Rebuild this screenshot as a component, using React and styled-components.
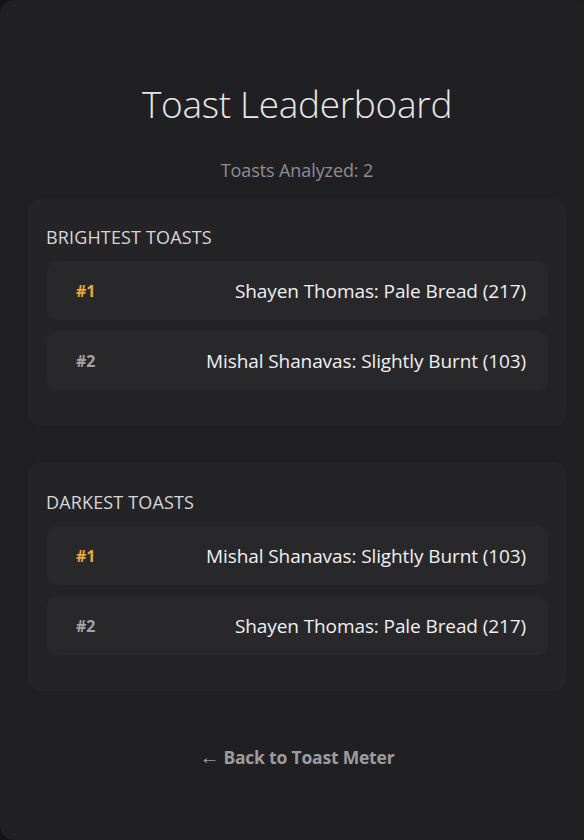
import React from "react";
import styled, { createGlobalStyle } from "styled-components";

const Global = createGlobalStyle`
  html, body { margin: 0; padding: 0; background: #131315; overflow: hidden; }
  body { font-family: "Open Sans", "Noto Sans", "Liberation Sans", sans-serif; }
`;

const Card = styled.main`
  box-sizing: border-box;
  width: 594px;
  height: 840px;
  background: #202023;
  border-radius: 14px;
  padding: 80px 28px 0 28px;
  display: flex;
  flex-direction: column;
`;

const Title = styled.h1`
  margin: 0;
  text-align: center;
  font-weight: 300;
  font-size: 37px;
  line-height: 48px;
  color: #e8e8ea;
  letter-spacing: -0.3px;
`;

const Subtitle = styled.p`
  margin: 30px 0 0 0;
  text-align: center;
  font-size: 18px;
  line-height: 24px;
  color: #8d8d92;
  letter-spacing: -0.1px;
`;

const Section = styled.section`
  margin-top: ${(p) => p.$gap}px;
  background: #242427;
  border-radius: 12px;
  padding: ${(p) => p.$top}px 18px 36px 18px;
  display: flex;
  flex-direction: column;
`;

const Heading = styled.h2`
  margin: 0 0 12px 0;
  font-size: 18px;
  line-height: 24px;
  font-weight: 400;
  color: #d6d6d9;
  text-transform: uppercase;
  letter-spacing: 0.15px;
`;

const List = styled.ol`
  list-style: none;
  margin: 0;
  padding: 0 0 0 1px;
  display: flex;
  flex-direction: column;
  gap: 11px;
`;

const Row = styled.li`
  height: 59px;
  box-sizing: border-box;
  background: #28282b;
  border-radius: 10px;
  padding: 0 22px 0 29px;
  display: flex;
  align-items: center;
  justify-content: space-between;
`;

const Rank = styled.span`
  font-weight: 700;
  font-size: 16px;
  color: ${(p) => (p.$first ? "#e9a73c" : "#a3a3a8")};
`;

const Entry = styled.span`
  font-size: 19px;
  color: #f0f0f2;
  letter-spacing: -0.1px;
`;

const Back = styled.a`
  margin-top: 54px;
  align-self: center;
  font-size: 17.5px;
  line-height: 24px;
  font-weight: 700;
  color: #9c9ca0;
  text-decoration: none;
  letter-spacing: -0.2px;
`;

const Arrow = styled.span`
  font-weight: 400;
  font-size: 20px;
  margin-right: 4px;
`;

const boards = [
  {
    title: "Brightest Toasts",
    gap: 17,
    top: 26,
    items: ["Shayen Thomas: Pale Bread (217)", "Mishal Shanavas: Slightly Burnt (103)"],
  },
  {
    title: "Darkest Toasts",
    gap: 36,
    top: 28,
    items: ["Mishal Shanavas: Slightly Burnt (103)", "Shayen Thomas: Pale Bread (217)"],
  },
];

export default function App() {
  return (
    <>
      <Global />
      <Card>
        <Title>Toast Leaderboard</Title>
        <Subtitle>Toasts Analyzed: 2</Subtitle>
        {boards.map((b) => (
          <Section key={b.title} $gap={b.gap} $top={b.top}>
            <Heading>{b.title}</Heading>
            <List>
              {b.items.map((it, i) => (
                <Row key={it}>
                  <Rank $first={i === 0}>#{i + 1}</Rank>
                  <Entry>{it}</Entry>
                </Row>
              ))}
            </List>
          </Section>
        ))}
        <Back href="#">
          <Arrow>←</Arrow>Back to Toast Meter
        </Back>
      </Card>
    </>
  );
}
